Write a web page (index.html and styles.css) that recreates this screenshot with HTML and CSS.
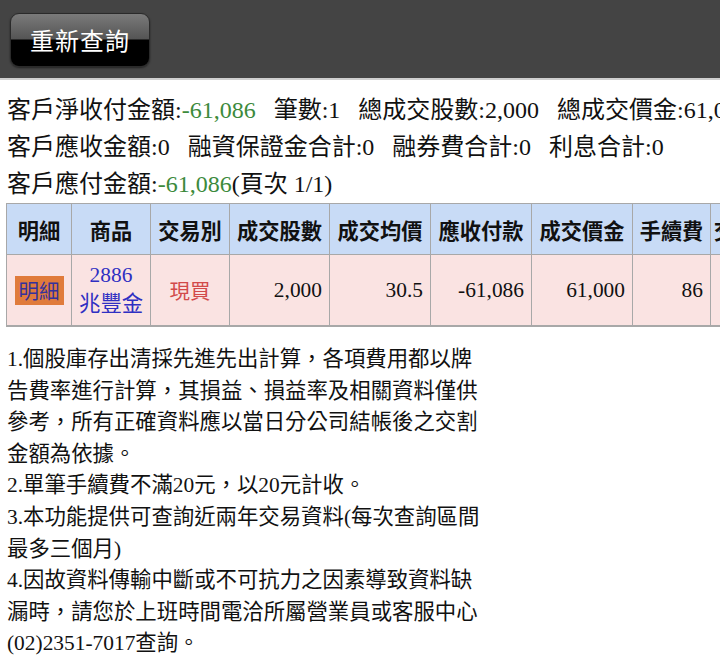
FILE: index.html
```html
<!DOCTYPE html>
<html lang="zh-Hant">
<head>
<meta charset="utf-8">
<title>查詢結果</title>
<link rel="stylesheet" href="styles.css">
</head>
<body>
<header class="topbar">
  <button class="btn-requery" type="button">重新查詢</button>
</header>
<main class="content">
  <div class="summary">
    <div class="sum-line">客戶淨收付金額:<span class="neg">-61,086</span>&nbsp;&nbsp;&nbsp;筆數:1&nbsp;&nbsp;&nbsp;總成交股數:2,000&nbsp;&nbsp;&nbsp;總成交價金:61,000</div>
    <div class="sum-line">客戶應收金額:0&nbsp;&nbsp;&nbsp;融資保證金合計:0&nbsp;&nbsp;&nbsp;融券費合計:0&nbsp;&nbsp;&nbsp;利息合計:0</div>
    <div class="sum-line">客戶應付金額:<span class="neg">-61,086</span>(頁次 1/1)</div>
  </div>
  <table class="grid">
    <colgroup>
      <col class="w65">
      <col class="w79">
      <col class="w79">
      <col class="w100">
      <col class="w101">
      <col class="w101">
      <col class="w101">
      <col class="w78">
      <col class="w70">
      <col class="w100">
    </colgroup>
    <thead>
      <tr>
        <th>明細</th>
        <th>商品</th>
        <th>交易別</th>
        <th>成交股數</th>
        <th>成交均價</th>
        <th>應收付款</th>
        <th>成交價金</th>
        <th>手續費</th>
        <th>交易稅</th>
        <th>融資金額</th>
      </tr>
    </thead>
    <tbody>
      <tr>
        <td class="center"><span class="detail-btn">明細</span></td>
        <td class="center prod">2886<br>兆豐金</td>
        <td class="center buy">現買</td>
        <td class="num">2,000</td>
        <td class="num">30.5</td>
        <td class="num">-61,086</td>
        <td class="num">61,000</td>
        <td class="num">86</td>
        <td class="num">0</td>
        <td class="num">0</td>
      </tr>
    </tbody>
  </table>
  <div class="notes">
    <p>1.個股庫存出清採先進先出計算，各項費用都以牌告費率進行計算，其損益、損益率及相關資料僅供參考，所有正確資料應以當日分公司結帳後之交割金額為依據。</p>
    <p>2.單筆手續費不滿20元，以20元計收。</p>
    <p>3.本功能提供可查詢近兩年交易資料(每次查詢區間最多三個月)</p>
    <p>4.因故資料傳輸中斷或不可抗力之因素導致資料缺漏時，請您於上班時間電洽所屬營業員或客服中心(02)2351-7017查詢。</p>
  </div>
</main>
</body>
</html>
```
FILE: styles.css
```css
html {
  overflow: hidden;
}
body {
  margin: 0;
  background: #ffffff;
  font-family: "Liberation Serif", "Noto Sans CJK TC", serif;
  color: #111111;
}
.topbar {
  height: 80px;
  background: #444444;
  border-bottom: 2px solid #cfcfcf;
  display: flex;
  align-items: flex-start;
  padding: 13px 0 0 10px;
  box-sizing: border-box;
}
.btn-requery {
  width: 140px;
  height: 54px;
  border-radius: 9px;
  border: 1px solid #2a2a2a;
  background: linear-gradient(to bottom, #7a7a7a 0%, #555555 48%, #000000 50%, #000000 100%);
  box-shadow: 0 1px 2px rgba(0,0,0,0.5);
  color: #ffffff;
  font-family: "Noto Sans CJK TC", sans-serif;
  font-size: 24px;
  letter-spacing: 1px;
  padding: 0;
  line-height: 52px;
}
.content {
  padding: 0 0 0 7px;
}
.summary {
  padding-top: 12px;
  font-size: 24px;
}
.sum-line {
  height: 37px;
  line-height: 37px;
  white-space: nowrap;
}
.neg {
  color: #3c8a3c;
}
.grid {
  margin-top: 0;
  border-collapse: collapse;
  table-layout: fixed;
  width: 874px;
  font-size: 21.4px;
  margin-left: -1px;
  border-bottom: 2px solid #a8a8a8;
}
.w65 { width: 65px; }
.w79 { width: 79px; }
.w100 { width: 100px; }
.w101 { width: 101px; }
.w78 { width: 78px; }
.w70 { width: 70px; }
.grid th, .grid td {
  border: 1px solid #a8a8a8;
  white-space: nowrap;
  overflow: hidden;
}
.grid th {
  background: #c8dbf6;
  height: 50px;
  padding: 0;
  text-align: center;
  font-family: "Noto Sans CJK TC", sans-serif;
  font-weight: 700;
  font-size: 21.2px;
  color: #111111;
}
.grid td {
  background: #fae3e2;
  height: 70px;
  padding: 0 7px;
}
.center { text-align: center; }
.num { text-align: right; }
.detail-btn {
  display: inline-block;
  background: #e07b3b;
  color: #35319c;
  padding: 0 4px;
  line-height: 29px;
  font-family: "Noto Sans CJK TC", sans-serif;
  font-size: 20.5px;
}
.prod {
  color: #2f2fc2;
  line-height: 29px;
}
.buy {
  color: #d24a4a;
  font-family: "Noto Sans CJK TC", sans-serif;
  font-size: 20.5px;
}
.notes {
  width: 478px;
  margin-top: 17px;
  font-size: 21.4px;
  line-height: 31.6px;
}
.notes p {
  margin: 0;
}
```
